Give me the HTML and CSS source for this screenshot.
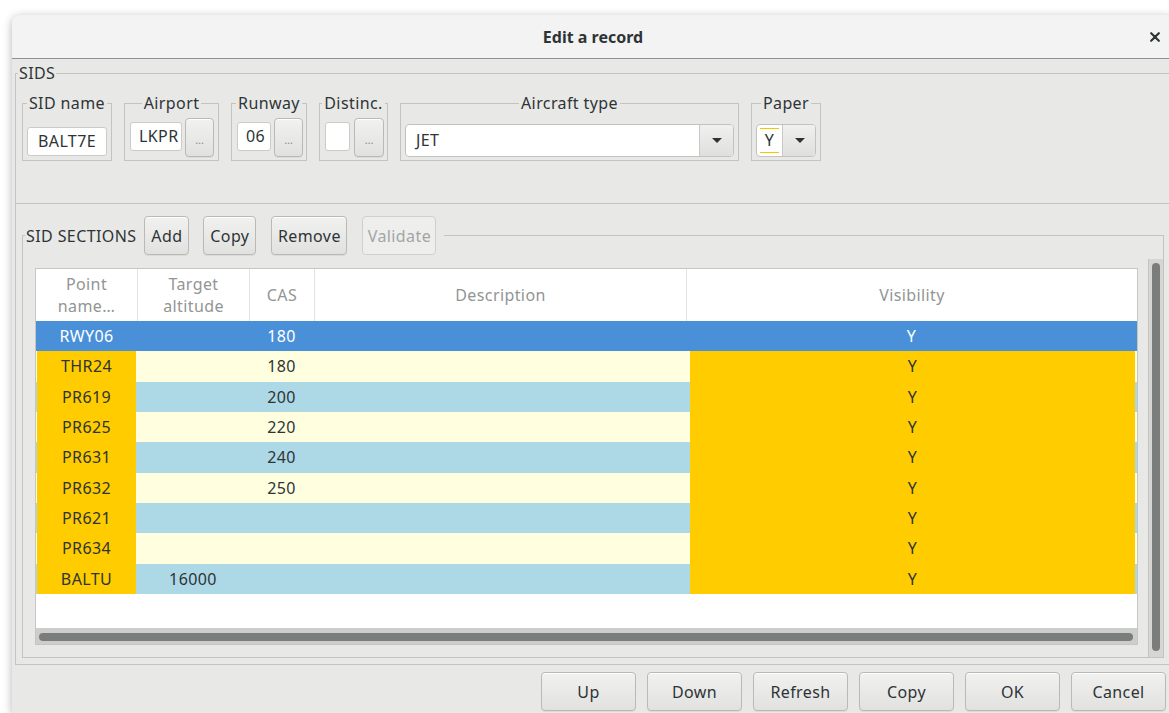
FILE: index.html
```html
<!DOCTYPE html>
<html lang="en">
<head>
<meta charset="utf-8">
<title>Edit a record</title>
<link rel="stylesheet" href="styles.css">
</head>
<body>
<div class="dialog">
  <header class="titlebar">
    <span></span>
    <h1 class="title">Edit a record</h1>
    <button class="close" aria-label="Close">
      <svg width="10" height="10" viewBox="0 0 10 10"><path d="M1.2 1.2L8.8 8.8M8.8 1.2L1.2 8.8" stroke="#2e3436" stroke-width="2.2" stroke-linecap="round"/></svg>
    </button>
  </header>

  <main class="content">
    <fieldset class="group sids">
      <legend>SIDS</legend>
      <div class="fields">
        <fieldset class="field f-name">
          <legend>SID name</legend>
          <div class="field-body"><span class="entry e-name">BALT7E</span></div>
        </fieldset>
        <fieldset class="field f-airport">
          <legend>Airport</legend>
          <div class="field-body"><span class="entry e-airport">LKPR</span><button class="btn dots">…</button></div>
        </fieldset>
        <fieldset class="field f-runway">
          <legend>Runway</legend>
          <div class="field-body"><span class="entry e-runway">06</span><button class="btn dots">…</button></div>
        </fieldset>
        <fieldset class="field f-distinc">
          <legend>Distinc.</legend>
          <div class="field-body"><span class="entry e-distinc"></span><button class="btn dots dots-wide">…</button></div>
        </fieldset>
        <fieldset class="field f-aircraft">
          <legend>Aircraft type</legend>
          <div class="field-body">
            <div class="combo c-aircraft">
              <span class="combo-text">JET</span>
              <span class="combo-btn"><svg width="10" height="5" viewBox="0 0 10 5"><path d="M0 0H10L5 5Z" fill="#2e3436"/></svg></span>
            </div>
          </div>
        </fieldset>
        <fieldset class="field f-paper">
          <legend>Paper</legend>
          <div class="field-body">
            <div class="combo c-paper">
              <span class="combo-text flag"><span class="mark">Y</span></span>
              <span class="combo-btn"><svg width="10" height="5" viewBox="0 0 10 5"><path d="M0 0H10L5 5Z" fill="#2e3436"/></svg></span>
            </div>
          </div>
        </fieldset>
      </div>
    </fieldset>

    <div class="lower">
      <fieldset class="group sections">
        <legend>
          <span class="sections-title">SID SECTIONS</span>
          <button class="btn tool b-add">Add</button>
          <button class="btn tool b-copy">Copy</button>
          <button class="btn tool b-remove">Remove</button>
          <button class="btn tool b-validate" disabled>Validate</button>
        </legend>
        <div class="sections-body">
          <div class="table">
            <div class="thead">
              <div class="th">Point<br>name…</div>
              <div class="th">Target<br>altitude</div>
              <div class="th">CAS</div>
              <div class="th">Description</div>
              <div class="th">Visibility</div>
            </div>
            <div class="tbody">
              <div class="row sel"><div class="td">RWY06</div><div class="td"></div><div class="td">180</div><div class="td"></div><div class="td">Y</div></div>
              <div class="row ly"><div class="td gold">THR24</div><div class="td"></div><div class="td">180</div><div class="td"></div><div class="td gold vis">Y</div></div>
              <div class="row lb"><div class="td gold">PR619</div><div class="td"></div><div class="td">200</div><div class="td"></div><div class="td gold vis">Y</div></div>
              <div class="row ly"><div class="td gold">PR625</div><div class="td"></div><div class="td">220</div><div class="td"></div><div class="td gold vis">Y</div></div>
              <div class="row lb"><div class="td gold">PR631</div><div class="td"></div><div class="td">240</div><div class="td"></div><div class="td gold vis">Y</div></div>
              <div class="row ly"><div class="td gold">PR632</div><div class="td"></div><div class="td">250</div><div class="td"></div><div class="td gold vis">Y</div></div>
              <div class="row lb"><div class="td gold">PR621</div><div class="td"></div><div class="td"></div><div class="td"></div><div class="td gold vis">Y</div></div>
              <div class="row ly"><div class="td gold">PR634</div><div class="td"></div><div class="td"></div><div class="td"></div><div class="td gold vis">Y</div></div>
              <div class="row lb"><div class="td gold">BALTU</div><div class="td">16000</div><div class="td"></div><div class="td"></div><div class="td gold vis">Y</div></div>
            </div>
            <div class="filler"></div>
            <div class="hscroll"><div class="thumb"></div></div>
          </div>
          <div class="vscroll"><div class="thumb"></div></div>
        </div>
      </fieldset>
    </div>

    <div class="actions">
      <button class="btn act">Up</button>
      <button class="btn act">Down</button>
      <button class="btn act">Refresh</button>
      <button class="btn act">Copy</button>
      <button class="btn act">OK</button>
      <button class="btn act">Cancel</button>
    </div>
  </main>
</div>
</body>
</html>
```

FILE: styles.css
```css
* { box-sizing: border-box; }

html, body {
  margin: 0;
  height: 100%;
}

body {
  background: #ffffff;
  overflow: hidden;
  font-family: "Noto Sans", "Open Sans", sans-serif;
  font-size: 16px;
  letter-spacing: 0.4px;
  color: #2e3436;
}

/* window */
.dialog {
  margin: 15px 0 0 12px;
  width: 1162px;
  height: 698px;
  border-radius: 8px 8px 0 0;
  background: #e8e8e7;
  box-shadow: 0 2px 10px rgba(0, 0, 0, 0.3);
  overflow: hidden;
  display: flex;
  flex-direction: column;
}

.titlebar {
  flex: none;
  height: 44px;
  display: grid;
  grid-template-columns: 1fr auto 1fr;
  align-items: center;
  padding: 0 14px;
  background: #f3f3f3;
  border-bottom: 1px solid #8f9191;
}

.title {
  margin: 0;
  font-size: 16px;
  font-weight: bold;
  letter-spacing: 0;
  line-height: 20px;
}

.close {
  justify-self: end;
  width: 10px;
  height: 10px;
  padding: 0;
  border: 0;
  background: none;
  display: flex;
}

.content {
  flex: 1;
  display: flex;
  flex-direction: column;
  padding: 0 3px;
}

/* group frames */
fieldset {
  margin: 0;
  padding: 0;
  min-width: 0;
  border: 1px solid #c3c3c1;
}

legend {
  padding: 0 1px;
  line-height: 20px;
}

.sids {
  flex: none;
  margin-top: 4px;
  padding: 10px 0 42px 6px;
}

.sids > legend { margin-left: -4px; }

.fields {
  display: flex;
  gap: 12px;
  align-items: flex-start;
}

.field { flex: none; }

.field > legend {
  margin-left: auto;
  margin-right: auto;
  padding: 0 2px;
}

.field-body {
  display: flex;
  align-items: flex-start;
  height: 47px;
}

.f-name { width: 90px; }
.f-name .field-body { padding: 14px 4px 0; }

.f-airport { width: 95px; }
.f-airport .field-body { padding: 5px 4px 0 5px; gap: 3px; }

.f-runway { width: 76px; }
.f-runway .field-body { padding: 5px 3px 0 5px; gap: 3px; }

.f-distinc { width: 69px; }
.f-distinc .field-body { padding: 5px 3px 0 5px; gap: 4px; }

.f-aircraft { width: 339px; }
.f-aircraft .field-body { padding: 11px 4px 0; }

.f-paper { width: 70px; }
.f-paper .field-body { padding: 11px 4px 0; }

/* text entries */
.entry {
  display: block;
  flex: none;
  height: 29px;
  line-height: 27px;
  background: #ffffff;
  border: 1px solid #cbcbc9;
  border-radius: 3px;
  white-space: nowrap;
  overflow: hidden;
}

.e-name { width: 80px; text-align: center; }
.e-airport { width: 52px; margin-top: 4px; padding-left: 8px; }
.e-runway { width: 34px; margin-top: 4px; padding-left: 8px; }
.e-distinc { width: 25px; margin-top: 4px; }

/* buttons */
.btn {
  font: inherit;
  letter-spacing: inherit;
  color: #2e3436;
  height: 39px;
  padding: 0 7px;
  border: 1px solid #b9b9b7;
  border-radius: 4px;
  background: linear-gradient(#f1f1f0, #e1e1df);
  box-shadow: inset 0 1px #ffffff, 0 1px rgba(0, 0, 0, 0.06);
  line-height: 20px;
  white-space: nowrap;
}

.btn:disabled {
  color: #a2a5a5;
  background: #eeeeed;
  border-color: #cfcfcd;
  box-shadow: none;
}

.dots {
  flex: none;
  width: 29px;
  padding: 4px 0 0;
  font-size: 11px;
  letter-spacing: 0;
  color: #8a8c8c;
}

.dots-wide { width: 30px; }

/* combo boxes */
.combo {
  display: flex;
  height: 33px;
  border: 1px solid #c2c2c0;
  border-radius: 4px;
  overflow: hidden;
  background: #ffffff;
}

.c-aircraft { width: 329px; }
.c-paper { width: 60px; }

.combo-text {
  flex: 1;
  padding-left: 10px;
  line-height: 31px;
}

.combo-text.flag {
  flex: none;
  width: 25px;
  padding: 0;
  display: flex;
  justify-content: center;
  align-items: flex-start;
}

.mark {
  margin-top: 3px;
  width: 19px;
  height: 25px;
  line-height: 23px;
  text-align: center;
  border-top: 1px solid #f6c700;
  border-bottom: 1px solid #f6c700;
}

.combo-btn {
  flex: none;
  width: 34px;
  display: flex;
  align-items: center;
  justify-content: center;
  border-left: 1px solid #c8c8c6;
  background: linear-gradient(#f0f0ef, #dfdfdd);
}

/* lower frame with the sections table */
.lower {
  flex: none;
  height: 461px;
  border: 1px solid #c3c3c1;
  border-top: 0;
  padding: 12px 6px 6px;
}

.sections {
  height: 442px;
}

.sections > legend {
  display: flex;
  align-items: center;
  margin-left: 2px;
  padding: 0 8px 0 1px;
}

.sections-title { margin-right: 8px; }

.tool { padding: 0; text-align: center; }
.tool + .tool { margin-left: 15px; }
.b-add { width: 45px; }
.b-copy { width: 53px; margin-left: 14px !important; }
.b-remove { width: 76px; }
.b-validate { width: 74px; }

.sections-body {
  display: flex;
  height: 402px;
}

.table {
  flex: 1;
  min-width: 0;
  margin: 13px 0 12px 12px;
  display: flex;
  flex-direction: column;
  background: #ffffff;
  border: 1px solid #c6c6c4;
}

.thead,
.row {
  display: grid;
  grid-template-columns: 101px 112px 65px 372px 451px;
}

.thead { height: 52px; flex: none; }

.th {
  display: flex;
  align-items: center;
  justify-content: center;
  text-align: center;
  line-height: 22px;
  color: #929595;
}

.th + .th { border-left: 1px solid #e2e2e2; }

.row {
  height: 30.33px;
  line-height: 30px;
}

.row.sel { background: #4a90d9; color: #ffffff; }
.row.ly { background: #ffffe0; }
.row.lb { background: #add8e6; }

.td {
  text-align: center;
  white-space: nowrap;
}

.td.gold {
  background: #ffcc00;
  margin: 0 1px;
}

.td.gold.vis { margin: 0 2px 0 4px; }

.filler { flex: 1; }

.hscroll {
  flex: none;
  height: 16px;
  padding: 5px 4px 3px 3px;
  background: #cdcdcc;
}

.hscroll .thumb {
  height: 8px;
  border-radius: 4px;
  background: #7b7d7d;
}

.vscroll {
  flex: none;
  width: 15px;
  margin: 4px 0 0 10px;
  padding: 4px 3px 6px 3px;
  background: #d6d6d5;
  border-left: 1px solid #c4c4c3;
}

.vscroll .thumb {
  height: 100%;
  width: 8px;
  border-radius: 4px;
  background: #7b7d7d;
}

/* dialog buttons */
.actions {
  flex: 1;
  display: flex;
  justify-content: flex-end;
  align-items: flex-start;
  gap: 11px;
  padding: 7px 5px 0 0;
}

.act { width: 95px; }
```
